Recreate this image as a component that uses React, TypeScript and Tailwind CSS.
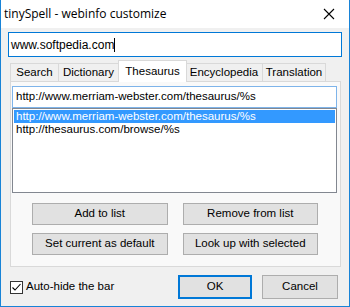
import React from 'react';

const TABS = [
  { label: 'Search', w: 'w-[49px]' },
  { label: 'Dictionary', w: 'w-[61px]' },
  { label: 'Thesaurus', w: 'w-[69px]' },
  { label: 'Encyclopedia', w: 'w-[78px]' },
  { label: 'Translation', w: 'w-[64px]' },
];
const ITEMS = ['http://www.merriam-webster.com/thesaurus/%s', 'http://thesaurus.com/browse/%s'];

function Btn({ label }: { label: string }) {
  return (
    <div className="flex items-center justify-center h-[22px] bg-[#e1e1e1] border border-[#adadad] text-[11.5px] text-black">
      {label}
    </div>
  );
}

export default function App() {
  return (
    <div
      className="w-[350px] h-[307px] flex flex-col bg-[#f0f0f0] border border-[#1883d7] border-t-0 overflow-hidden"
      style={{ fontFamily: '"Liberation Sans", Arial, sans-serif' }}
    >
      {/* Title bar */}
      <div className="h-[28px] shrink-0 bg-white flex items-center justify-between pl-[3px] pr-[12px]">
        <span className="text-[12px] text-black" style={{ fontFamily: '"Open Sans", sans-serif' }}>
          tinySpell - webinfo customize
        </span>
        <svg width="12" height="12" viewBox="0 0 12 12" className="mr-[2px]">
          <path d="M1 1L11 11M11 1L1 11" stroke="#000" strokeWidth="1.1" />
        </svg>
      </div>

      <div className="flex flex-col px-[7px] pt-[4px]">
        <div className="h-[25px] bg-white border border-[#0078d7] flex items-center px-[2px] text-[12px] text-black">
          www.softpedia.com<span className="w-px h-[14px] bg-black" />
        </div>

        {/* Tabs */}
        <div className="flex items-end h-[25px] pl-[2px]">
          {TABS.map((t) =>
            t.label === 'Thesaurus' ? (
              <div
                key={t.label}
                className={`${t.w} h-[22px] -mx-px relative z-10 bg-white border border-b-0 border-[#d9d9d9] flex items-center justify-center text-[11.5px] text-black`}
              >
                {t.label}
              </div>
            ) : (
              <div
                key={t.label}
                className={`${t.w} h-[19px] bg-[#f0f0f0] border border-b-0 border-[#d9d9d9] flex items-center justify-center text-[11.5px] text-black -ml-px first:ml-0`}
              >
                {t.label}
              </div>
            )
          )}
        </div>

        {/* Panel */}
        <div className="h-[186px] w-[331px] ml-[2px] -mt-px bg-[#f9f9f9] border border-[#d9d9d9] flex flex-col pt-[4px]">
          <div className="h-[22px] w-[325px] ml-[1px] bg-white border border-[#7eb4ea] flex items-center px-[3px] text-[11.5px] text-black">
            http://www.merriam-webster.com/thesaurus/%s
          </div>
          <div className="h-[85px] w-[325px] ml-[1px] bg-white border border-[#828790] flex flex-col p-px">
            {ITEMS.map((it, i) => (
              <div
                key={it}
                className={`h-[13px] leading-[13px] px-[2px] text-[11.5px] ${
                  i === 0 ? 'bg-[#3399ff] text-white' : 'text-black'
                }`}
              >
                {it}
              </div>
            ))}
          </div>
          <div className="grid grid-cols-2 w-[286px] ml-[21px] gap-x-[15px] gap-y-[8px] mt-[10px]">
            <Btn label="Add to list" />
            <Btn label="Remove from list" />
            <Btn label="Set current as default" />
            <Btn label="Look up with selected" />
          </div>
        </div>

        {/* Bottom row */}
        <div className="flex items-center mt-[8px]">
          <div className="flex items-center gap-[3px] ml-[2px]">
            <div className="w-[13px] h-[13px] bg-white border border-[#333] flex items-center justify-center">
              <svg width="11" height="11" viewBox="0 0 11 11">
                <path d="M1.5 5.5L4 8L9.5 2" stroke="#000" strokeWidth="1.1" fill="none" />
              </svg>
            </div>
            <span className="text-[11.5px] text-black">Auto-hide the bar</span>
          </div>
          <div className="ml-auto flex gap-[10px] mr-[4px]">
            <div className="w-[74px] h-[24px] flex items-center justify-center bg-[#e1e1e1] border-2 border-[#0078d7] text-[11.5px] text-black">
              OK
            </div>
            <div className="w-[76px] h-[24px] flex items-center justify-center bg-[#e1e1e1] border border-[#adadad] text-[11.5px] text-black">
              Cancel
            </div>
          </div>
        </div>
      </div>
    </div>
  );
}
